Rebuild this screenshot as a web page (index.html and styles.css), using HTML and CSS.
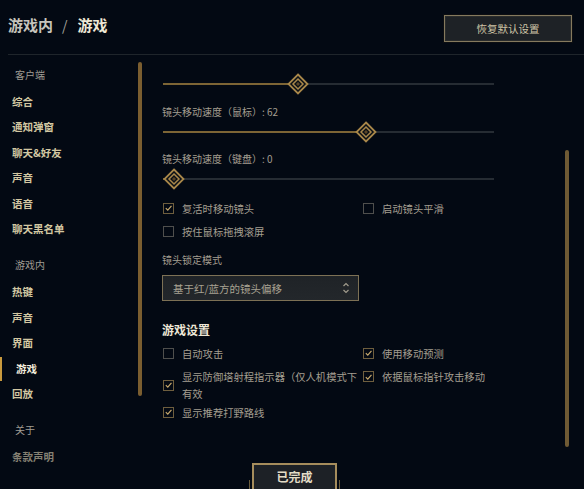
FILE: index.html
```html
<!DOCTYPE html>
<html lang="zh-CN">
<head>
<meta charset="utf-8">
<link rel="stylesheet" href="styles.css">
</head>
<body>
<div class="page">
  <header class="header">
    <div class="title"><span class="crumb">游戏内</span><span class="slash">/</span><span class="current">游戏</span></div>
    <button class="btn-reset">恢复默认设置</button>
  </header>
  <div class="main">
    <nav class="sidebar">
      <div class="sec first">客户端</div>
      <div class="item">综合</div>
      <div class="item">通知弹窗</div>
      <div class="item">聊天&amp;好友</div>
      <div class="item">声音</div>
      <div class="item">语音</div>
      <div class="item">聊天黑名单</div>
      <div class="sec">游戏内</div>
      <div class="item">热键</div>
      <div class="item">声音</div>
      <div class="item">界面</div>
      <div class="item active">游戏</div>
      <div class="item">回放</div>
      <div class="sec">关于</div>
      <div class="item dim">条款声明</div>
      <div class="side-thumb"></div>
    </nav>
    <section class="content">
      <div class="slider s1" style="--v:40">
        <div class="track"><div class="fill"></div></div>
        <svg class="knob" viewBox="0 0 22 22" width="22" height="22"><polygon points="11,1.5 20.5,11 11,20.5 1.5,11" fill="#0a0f16" stroke="#a8874a" stroke-width="1.8"/><polygon points="11,6 16,11 11,16 6,11" fill="none" stroke="#a8874a" stroke-width="1.5"/><polygon points="11,9 13,11 11,13 9,11" fill="#5a4626"/></svg>
      </div>
      <div class="label l1">镜头移动速度（鼠标）: 62</div>
      <div class="slider s2" style="--v:62">
        <div class="track"><div class="fill"></div></div>
        <svg class="knob" viewBox="0 0 22 22" width="22" height="22"><polygon points="11,1.5 20.5,11 11,20.5 1.5,11" fill="#0a0f16" stroke="#a8874a" stroke-width="1.8"/><polygon points="11,6 16,11 11,16 6,11" fill="none" stroke="#a8874a" stroke-width="1.5"/><polygon points="11,9 13,11 11,13 9,11" fill="#5a4626"/></svg>
      </div>
      <div class="label l2">镜头移动速度（键盘）: 0</div>
      <div class="slider s3" style="--v:0">
        <div class="track"><div class="fill"></div></div>
        <svg class="knob" viewBox="0 0 22 22" width="22" height="22"><polygon points="11,1.5 20.5,11 11,20.5 1.5,11" fill="#0a0f16" stroke="#a8874a" stroke-width="1.8"/><polygon points="11,6 16,11 11,16 6,11" fill="none" stroke="#a8874a" stroke-width="1.5"/><polygon points="11,9 13,11 11,13 9,11" fill="#5a4626"/></svg>
      </div>
      <div class="grid g1">
        <label class="check"><span class="box on"><svg viewBox="0 0 10 10" width="10" height="10"><polyline points="2,5.2 4.2,7.4 8.3,2.6" fill="none" stroke="#c8aa6e" stroke-width="1.3"/></svg></span><span class="txt">复活时移动镜头</span></label>
        <label class="check"><span class="box"></span><span class="txt">启动镜头平滑</span></label>
        <label class="check"><span class="box"></span><span class="txt">按住鼠标拖拽滚屏</span></label>
      </div>
      <div class="label l3">镜头锁定模式</div>
      <div class="select"><span>基于红/蓝方的镜头偏移</span><svg class="arrows" viewBox="0 0 8 14" width="8" height="14"><polyline points="1.5,5 4,2.5 6.5,5" fill="none" stroke="#a09b8c" stroke-width="1.2"/><polyline points="1.5,9 4,11.5 6.5,9" fill="none" stroke="#a09b8c" stroke-width="1.2"/></svg></div>
      <h2 class="heading">游戏设置</h2>
      <div class="grid g2">
        <label class="check"><span class="box"></span><span class="txt">自动攻击</span></label>
        <label class="check"><span class="box on"><svg viewBox="0 0 10 10" width="10" height="10"><polyline points="2,5.2 4.2,7.4 8.3,2.6" fill="none" stroke="#c8aa6e" stroke-width="1.3"/></svg></span><span class="txt">使用移动预测</span></label>
        <label class="check"><span class="box on"><svg viewBox="0 0 10 10" width="10" height="10"><polyline points="2,5.2 4.2,7.4 8.3,2.6" fill="none" stroke="#c8aa6e" stroke-width="1.3"/></svg></span><span class="txt">显示防御塔射程指示器（仅人机模式下有效</span></label>
        <label class="check top"><span class="box on"><svg viewBox="0 0 10 10" width="10" height="10"><polyline points="2,5.2 4.2,7.4 8.3,2.6" fill="none" stroke="#c8aa6e" stroke-width="1.3"/></svg></span><span class="txt">依据鼠标指针攻击移动</span></label>
        <label class="check"><span class="box on"><svg viewBox="0 0 10 10" width="10" height="10"><polyline points="2,5.2 4.2,7.4 8.3,2.6" fill="none" stroke="#c8aa6e" stroke-width="1.3"/></svg></span><span class="txt">显示推荐打野路线</span></label>
      </div>
      <div class="content-thumb"></div>
    </section>
  </div>
  <div class="footer-btn"><button class="btn-done">已完成</button></div>
</div>
</body>
</html>
```

FILE: styles.css
```css
* { box-sizing: border-box; }
html, body {
  margin: 0;
  padding: 0;
  width: 584px;
  height: 489px;
  overflow: hidden;
  background: #030913;
  font-family: "Noto Sans CJK SC", "Noto Sans", sans-serif;
}
.page {
  position: relative;
  width: 584px;
  height: 489px;
  display: flex;
  flex-direction: column;
}
.header {
  height: 55px;
  margin-left: 8px;
  padding-right: 12px;
  border-bottom: 1px solid #1f252b;
  display: flex;
  align-items: center;
  justify-content: space-between;
  flex: none;
}
.title {
  font-size: 15px;
  font-weight: 700;
  line-height: 20px;
  margin-bottom: 4px;
  display: flex;
  align-items: center;
}
.crumb { color: #c6c4bc; }
.slash { color: #a5a39c; margin: 0 10px 0 9px; font-weight: 400; font-size: 14px; }
.current { color: #efe8d6; }
.btn-reset {
  width: 128px;
  height: 27px;
  margin-top: 2px;
  border: 1px solid #857a5e;
  outline: 1px solid #0c0e12;
  background: #1e2226;
  color: #cfc5a6;
  font-family: inherit;
  font-size: 10.5px;
  padding: 0;
  box-shadow: inset 0 0 0 1px #2a2c2c;
}
.main {
  flex: 1;
  display: flex;
  min-height: 0;
}
.sidebar {
  position: relative;
  width: 142px;
  flex: none;
  padding-top: 6px;
}
.sec {
  height: 28px;
  line-height: 28px;
  padding-left: 15px;
  font-size: 10px;
  color: #a09c94;
  margin-top: 10px;
}
.sec.first { margin-top: 0; }
.item {
  position: relative;
  height: 25.4px;
  line-height: 25.4px;
  padding-left: 12px;
  font-size: 10.5px;
  font-weight: 700;
  color: #d2c7a2;
}
.item.active {
  padding-left: 16px;
  color: #f2ecdc;
}
.item.active::before {
  content: "";
  position: absolute;
  left: 0;
  top: 1px;
  width: 2px;
  height: 24px;
  background: #c99a3e;
}
.item.dim { color: #858173; }
.side-thumb {
  position: absolute;
  left: 138px;
  top: 7px;
  width: 4px;
  height: 334px;
  border-radius: 2px;
  background: #7b5e30;
}
.content {
  position: relative;
  flex: 1;
  padding-left: 20px;
  padding-top: 19px;
}
.slider {
  position: relative;
  width: 332px;
  height: 20px;
}
.track {
  position: absolute;
  left: 1px;
  right: 0;
  top: 9px;
  height: 2px;
  background: #262c33;
}
.fill {
  height: 2px;
  width: calc(11px + var(--v) * (100% - 22px) / 100);
  background: #7d6535;
}
.knob {
  position: absolute;
  top: -1px;
  left: calc(1px + var(--v) * (100% - 23px) / 100);
}
.label {
  height: 16px;
  line-height: 16px;
  font-size: 10px;
  color: #a39e90;
}
.l1 { margin-top: 10px; }
.s2 { margin-top: 2px; }
.l2 { margin-top: 9px; }
.s3 { margin-top: 2px; }
.grid {
  display: grid;
  grid-template-columns: 200px 200px;
  align-items: start;
}
.g1 { margin-top: 10px; row-gap: 5px; }
.check {
  display: flex;
  align-items: center;
  min-height: 18px;
  padding-left: 1px;
  font-size: 10.3px;
  line-height: 17px;
  color: #a39e90;
}
.check.top { align-items: flex-start; }
.check.top .box { margin-top: 3px; }
.box {
  flex: none;
  width: 11px;
  height: 11px;
  border: 1px solid #4f4f4d;
  margin-right: 8px;
  display: flex;
  align-items: center;
  justify-content: center;
}
.box.on { border-color: #6e5e3e; }
.box svg { display: block; }
.txt { width: 180px; }
.l3 { margin-top: 12px; }
.select {
  margin-top: 7px;
  width: 197px;
  height: 26px;
  border: 1px solid #7d7155;
  background: linear-gradient(#1f2327, #23272b);
  display: flex;
  align-items: center;
  justify-content: space-between;
  padding: 0 8px 0 10px;
  font-size: 10.5px;
  color: #a8a292;
}
.arrows { display: block; }
.heading {
  margin: 20px 0 0;
  height: 18px;
  line-height: 18px;
  font-size: 12px;
  font-weight: 700;
  color: #eee7d6;
}
.g2 { margin-top: 5px; row-gap: 6px; }
.g2 .check:nth-child(5) { margin-top: -5px; }
.content-thumb {
  position: absolute;
  left: 423px;
  top: 95px;
  width: 4px;
  height: 297px;
  border-radius: 2px;
  background: #6f5a34;
}
.footer-btn {
  position: absolute;
  left: 249px;
  top: 463px;
  width: 91px;
  height: 30px;
  display: flex;
  justify-content: center;
}
.footer-btn::before,
.footer-btn::after {
  content: "";
  position: absolute;
  top: 17px;
  width: 1px;
  height: 12px;
  background: #6a5c3c;
}
.footer-btn::before { left: 0; }
.footer-btn::after { right: 0; }
.btn-done {
  width: 85px;
  height: 30px;
  border: 2px solid #a68d5c;
  background: #1d2126;
  color: #e3dcc6;
  font-family: inherit;
  font-size: 12px;
  font-weight: 700;
  padding: 0 0 4px;
}
```
